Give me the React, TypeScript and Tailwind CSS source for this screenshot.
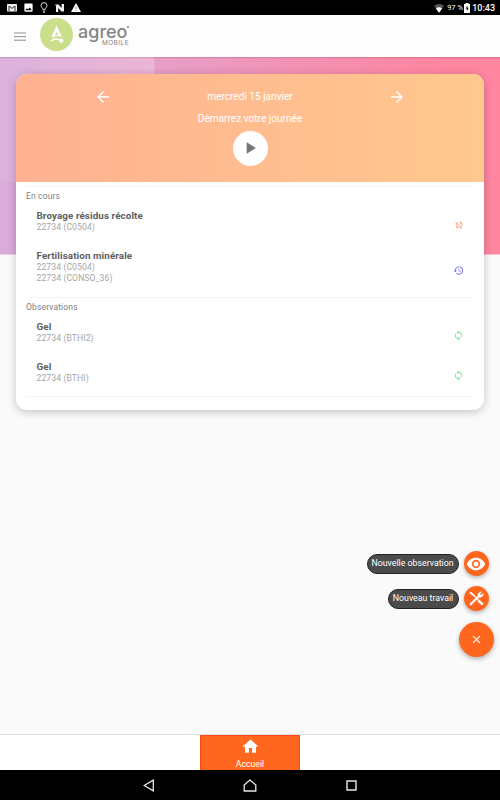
import React from "react";
import { MdSyncDisabled, MdHistory, MdSync, MdArrowBack, MdArrowForward, MdPlayArrow, MdHome, MdClose, MdVisibility, MdImage } from "react-icons/md";

const ROBOTO = "font-['Roboto','Liberation_Sans',sans-serif]";

function StatusBar() {
  return (
    <div className="flex h-[15px] shrink-0 items-center justify-between bg-black pl-[7px] pr-[5px] text-white">
      <div className="flex items-center gap-[6px]">
        <svg className="h-[9px] w-[10px]" viewBox="0 0 10 9">
          <rect x="0" y="1" width="10" height="7.5" rx="0.8" fill="#f2f2f2" />
          <path d="M2 8V3l3 2.4L8 3v5" fill="none" stroke="#333" strokeWidth="1" />
        </svg>
        <MdImage className="size-[11px]" />
        <svg className="h-[11px] w-[8px]" viewBox="0 0 8 11" fill="none" stroke="#ddd" strokeWidth="1">
          <path d="M2.7 7.3C2.7 6 1 5.4 1 3.6a3 3 0 0 1 6 0C7 5.4 5.3 6 5.3 7.3z" />
          <path d="M2.8 9h2.4M3.2 10.4h1.6" />
        </svg>
        <svg className="ml-[1px] h-[8px] w-[10px]" viewBox="0 0 10 8">
          <path d="M0 .6h3.600L6.600 4V0H9v7.400H6.400L3.200 4v4H1V2z" fill="#eee" />
        </svg>
        <svg className="h-[9px] w-[10px]" viewBox="0 0 10 9">
          <path d="M5 0l5 9H0z" fill="#fff" />
          <path d="M5 3.500v2.500M5 7v1" stroke="#777" strokeWidth="0.900" />
        </svg>
      </div>
      <div className="flex items-center pt-px">
        <svg className="mr-[3px] h-[9px] w-[10px]" viewBox="0 0 10 9">
          <path d="M0 2a7 7 0 0 1 10 0L5 8.800z" fill="#555" />
          <path d="M1.900 4.500a4.400 4.400 0 0 1 6.200 0L5 8.800z" fill="#fff" />
        </svg>
        <span className="w-[17px] whitespace-nowrap text-[7.500px] leading-[14px]">97 %</span>
        <svg className="mr-[2px] h-[10px] w-[6px]" viewBox="0 0 6 10">
          <path d="M1.500 0h3v1H6v9H0V1h1.500z" fill="#fff" />
          <path d="M3.700 2.200L1.500 5.600h1.300v2.600L4.700 4.700H3.300z" fill="#111" />
        </svg>
        <span className="text-[9px] font-medium leading-[14px]">10:43</span>
      </div>
    </div>
  );
}

function AppBar() {
  return (
    <header className="z-10 flex h-[42px] shrink-0 items-center bg-[#fdfdfd] shadow-[0_1px_1px_rgba(0,0,0,0.12)]">
      <svg className="ml-[14px] h-[9px] w-[12px]" viewBox="0 0 12 9" stroke="#8f8f8f">
        <path d="M0 1h12M0 4.600h12M0 8.200h12" />
      </svg>
      <svg className="-mt-[3px] ml-[14px] size-[33px]" viewBox="0 0 33 33">
        <circle cx="16.500" cy="16.500" r="16.500" fill="#cbdf8b" />
        <path d="M16.500 7.500L11.300 19h2.700c1.300-1 3.600-1.400 5.500-.5h2.200z" fill="#fff" />
        <path d="M16.500 13.500l-1.500 4c1.100-.5 2.200-.5 3.100-.2z" fill="#cbdf8b" />
        <path d="M10.300 24c1.600-3.800 5-5.200 8-3.200 1 .7 2 .8 3 .6-.8 1-2 1.300-3.100.8-2.600-1.300-4.700.6-7.900 1.800z" fill="#fff" />
        <circle cx="21.300" cy="22.700" r="2.100" fill="#fff" />
      </svg>
      <div className="mb-[2px] ml-[5px] flex h-[24px] w-[52px] flex-col text-[#858585]">
        <div className="flex h-[17px] items-start">
          <span className="whitespace-nowrap text-[18px] font-medium leading-[17px]" style={{ fontFamily: "Inter, sans-serif" }}>agreo</span>
          <span className="mt-[3px] size-[2px] shrink-0 rounded-full bg-[#858585]" />
        </div>
        <div className="pr-px text-right text-[6.500px] leading-[7px] tracking-[0.450px]" style={{ fontFamily: "Inter, sans-serif" }}>MOBILE</div>
      </div>
    </header>
  );
}

function Entry({ title, lines, icon, className }: { title: string; lines: string[]; icon: React.ReactNode; className: string }) {
  return (
    <div className={`flex items-center justify-between pl-[10.500px] pr-[10.500px] ${className}`}>
      <div>
        <div className="text-[9.800px] font-bold leading-[12px] tracking-[0.100px] text-[#606060]">{title}</div>
        {lines.map((l) => (
          <div key={l} className="text-[8.600px] leading-[11px] tracking-[0.100px] text-[#a5a5a5]">{l}</div>
        ))}
      </div>
      {icon}
    </div>
  );
}

function DayCard() {
  return (
    <section className="z-[1] col-start-1 row-start-1 mx-4 mt-[16.500px] h-[336px] self-start overflow-hidden rounded-[11px] bg-white shadow-[0_2px_10px_rgba(0,0,0,0.22)]">
      <div className="flex h-[108.500px] flex-col items-center bg-gradient-to-r from-[#ffb191] to-[#ffc88e] pt-[15px] text-white">
        <div className="flex h-4 w-[312px] items-center justify-between">
          <MdArrowBack className="size-[18px]" />
          <span className="text-[10.100px] leading-4">mercredi 15 janvier</span>
          <MdArrowForward className="size-[18px]" />
        </div>
        <div className="mt-[6px] text-[10.100px] leading-4">Démarrez votre journée</div>
        <div className="mt-[4px] flex size-[35px] shrink-0 items-center justify-center rounded-full bg-white">
          <MdPlayArrow className="mr-px size-[20px] text-[#757575]" />
        </div>
      </div>
      <div className="mx-[10px] mt-[4px] h-[111px] border-t border-[#f4f4f4]">
        <div className="mt-[3px] text-[8.600px] leading-[12px] tracking-[0.100px] text-[#838383]">En cours</div>
        <Entry className="mt-[8px] h-[23px]" title="Broyage résidus récolte" lines={["22734 (C0504)"]} icon={<MdSyncDisabled className="mt-[6px] size-[10px] text-[#ff9b70]" />} />
        <Entry className="mt-[17px] h-[34px]" title="Fertilisation minérale" lines={["22734 (C0504)", "22734 (CONSO_36)"]} icon={<MdHistory className="mt-[6px] size-[11px] text-[#7b77f0]" />} />
      </div>
      <div className="mx-[10px] h-[100px] border-y border-[#f4f4f4]">
        <div className="mt-[3px] text-[8.600px] leading-[12px] tracking-[0.100px] text-[#838383]">Observations</div>
        <Entry className="mt-[8px] h-[23px]" title="Gel" lines={["22734 (BTHI2)"]} icon={<MdSync className="mt-[6px] size-[11px] text-[#78e296]" />} />
        <Entry className="mt-[17px] h-[23px]" title="Gel" lines={["22734 (BTHI)"]} icon={<MdSync className="mt-[6px] size-[11px] text-[#78e296]" />} />
      </div>
    </section>
  );
}

function Actions() {
  return (
    <div className="z-[1] col-start-1 row-start-1 flex flex-col items-end self-end pb-[77px] pr-[6.500px]">
      <div className="mr-[5px] flex h-[25px] items-center gap-[5px]">
        <span className="flex h-5 w-[92px] items-center justify-center whitespace-nowrap rounded-[10px] border border-[#222] bg-[#4b4b4b] text-[8.800px] text-white">Nouvelle observation</span>
        <span className="flex size-[25px] items-center justify-center rounded-full bg-[#ff671f] text-white shadow-[0_2px_4px_rgba(0,0,0,0.28)]">
          <MdVisibility className="size-[20px]" />
        </span>
      </div>
      <div className="mr-[5px] mt-[10px] flex h-[25px] items-center gap-[5px]">
        <span className="flex h-5 w-[71px] items-center justify-center whitespace-nowrap rounded-[10px] border border-[#222] bg-[#4b4b4b] text-[8.800px] text-white">Nouveau travail</span>
        <span className="flex size-[25px] items-center justify-center rounded-full bg-[#ff671f] text-white shadow-[0_2px_4px_rgba(0,0,0,0.28)]">
          <svg className="size-[15px]" viewBox="0 0 15 15" fill="none" stroke="#fff">
            <path d="M1 1.300l3.700 3" strokeWidth="2" />
            <path d="M4.500 4l5 5" strokeWidth="1.200" />
            <path d="M9.300 9.300l4.400 4.400" strokeWidth="2.600" />
            <path d="M1.200 13.800l8.800-8.800" strokeWidth="2.300" />
            <path d="M12.800.7L10.800 2.900l1.400 1.400L14.300 2.200a3.500 3.500 0 0 1-5 3.800 3.500 3.500 0 0 1 3.500-5.300z" fill="#fff" strokeWidth="0.300" />
          </svg>
        </span>
      </div>
      <div className="mt-[11px] flex size-[35px] items-center justify-center rounded-full bg-[#ff671f] text-white shadow-[0_2px_5px_rgba(0,0,0,0.3)]">
        <MdClose className="size-[13px]" />
      </div>
    </div>
  );
}

export default function App() {
  return (
    <div className={`flex h-[800px] w-[500px] flex-col overflow-hidden bg-[#fafafa] ${ROBOTO}`}>
      <StatusBar />
      <AppBar />
      <main className="grid min-h-0 flex-1 grid-cols-1 grid-rows-1">
        <svg className="col-start-1 row-start-1 h-[197.500px] w-[500px] self-start" viewBox="0 0 500 197.5">
          <defs>
            <linearGradient id="sky" gradientUnits="userSpaceOnUse" x1="50" y1="150" x2="450" y2="50">
              <stop offset="0" stopColor="#daabdb" />
              <stop offset="1" stopColor="#ff85a0" />
            </linearGradient>
            <linearGradient id="orb" x1="0" y1="0" x2="1" y2="0">
              <stop offset="0.300" stopColor="#fff" stopOpacity="0.020" />
              <stop offset="1" stopColor="#fff" stopOpacity="0.200" />
            </linearGradient>
          </defs>
          <rect width="500" height="197.5" fill="url(#sky)" />
          <circle cx="39" cy="13" r="115.5" fill="url(#orb)" />
          <circle cx="39" cy="13" r="115.5" fill="#fff" fillOpacity="0.050" />
        </svg>
        <DayCard />
        <Actions />
      </main>
      <nav className="flex h-[36px] shrink-0 justify-center border-t border-[#dedede] bg-white">
        <div className="flex w-[100px] flex-col items-center border-x border-t border-[#ff4617] bg-[#ff671f] text-white">
          <MdHome className="mt-px size-[19px]" />
          <span className="mt-[1.500px] text-[8.700px] leading-[12px]">Accueil</span>
        </div>
      </nav>
      <div className="flex h-[30px] shrink-0 items-center justify-between bg-black pl-[142.500px] pr-[143px] pt-px">
        <svg className="h-[13px] w-[12px]" viewBox="0 0 12 13" fill="none" stroke="#e8e8e8" strokeWidth="1.300">
          <path d="M10.300 1.200v10.600L1.200 6.500z" />
        </svg>
        <svg className="mr-px h-[13px] w-[14px]" viewBox="0 0 14 13" fill="none" stroke="#e8e8e8" strokeWidth="1.300">
          <path d="M7 1L1.200 6v6h11.600V6z" />
        </svg>
        <svg className="size-[11px]" viewBox="0 0 11 11" fill="none" stroke="#e8e8e8" strokeWidth="1.400">
          <path d="M1 1h9v9H1z" />
        </svg>
      </div>
    </div>
  );
}
